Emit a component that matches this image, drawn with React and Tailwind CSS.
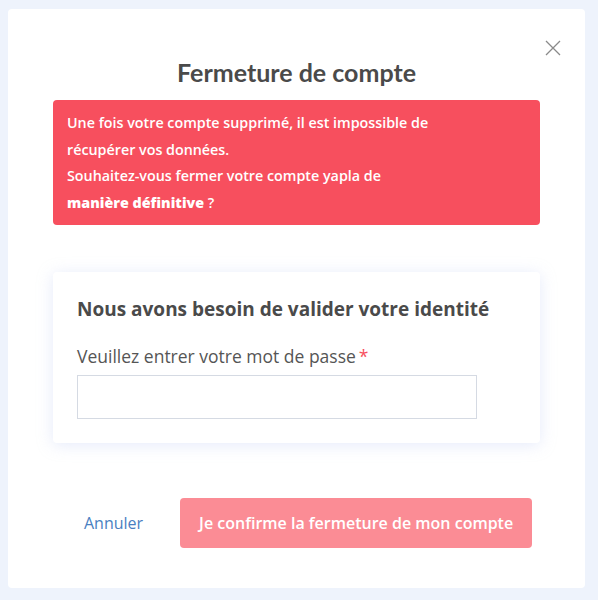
export default function App() {
  return (
    <div className="w-[598px] h-[600px] bg-[#eef3fc] pt-[9px] pl-[8px] overflow-hidden" style={{ fontFamily: "'Open Sans', 'Noto Sans', sans-serif" }}>
      <div className="w-[577px] h-[579px] bg-white rounded-[4px] px-[45px] pt-[47px] relative">
        <button className="absolute right-[24px] top-[31px] w-[16px] h-[16px] text-[#8a8a8a]">
          <svg width="16" height="16" viewBox="0 0 16 16" fill="none" stroke="currentColor" strokeWidth="1.3">
            <path d="M1 1L15 15M15 1L1 15" />
          </svg>
        </button>
        <h2 className="text-center text-[25px] leading-[32px] font-bold text-[#4a4a4a] font-['Lato']">Fermeture de compte</h2>
        <div className="mt-[12px] h-[125px] bg-[#f74f5e] rounded-[4px] px-[14px] pt-[10px] text-white text-[14.3px] leading-[26.7px] font-semibold">
          <p>Une fois votre compte supprimé, il est impossible de</p>
          <p>récupérer vos données.</p>
          <p>Souhaitez-vous fermer votre compte yapla de</p>
          <p><span className="font-extrabold">manière définitive</span> ?</p>
        </div>
        <div className="mt-[47px] bg-white rounded-[4px] shadow-[0_2px_16px_rgba(180,195,240,0.35)] px-[24px] pt-[25px] pb-[24px]">
          <h3 className="text-[19px] leading-[24px] font-bold text-[#4a4a4a]">Nous avons besoin de valider votre identité</h3>
          <label className="block mt-[24px] text-[17.5px] leading-[22px] text-[#555555]">
            Veuillez entrer votre mot de passe<span className="text-[#f74f5e] ml-[3px]">*</span>
          </label>
          <input type="password" className="mt-[8px] block w-[400px] h-[44px] border border-[#d5dae3] outline-none" />
        </div>
        <div className="mt-[55px] flex items-center pl-[31px]">
          <button className="text-[16px] text-[#4a7fc1]">Annuler</button>
          <button className="ml-[37px] w-[352px] h-[50px] rounded-[4px] bg-[#fb8c95] text-white text-[16px] font-semibold">Je confirme la fermeture de mon compte</button>
        </div>
      </div>
    </div>
  );
}
